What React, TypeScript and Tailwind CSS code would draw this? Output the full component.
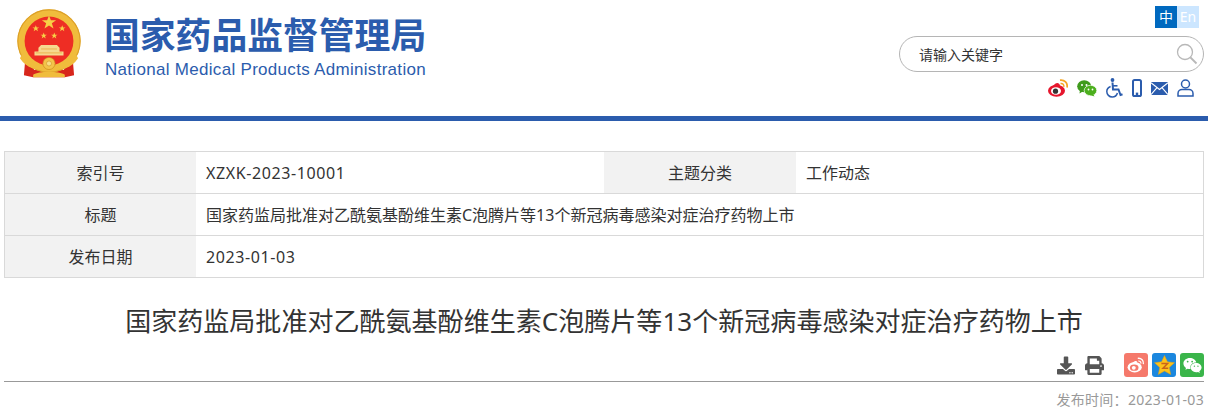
import { FaDownload, FaPrint, FaWeixin } from "react-icons/fa";

const cjk = "font-['Noto_Sans','Noto_Sans_CJK_SC',sans-serif]";

function Emblem() {
  const stars = [
    [25, 10, 1.8],
    [15, 14.5, 0.85],
    [35, 14.5, 0.85],
    [21, 20, 0.8],
    [29, 20, 0.8],
  ];
  return (
    <svg width="66" height="72" viewBox="0 0 50 54">
      <path d="M7 38 L6 50 L13 51.5 L37 51.5 L44 50 L43 38 L36 46 L14 46 Z" fill="#d8261c" />
      <circle cx="25" cy="24" r="24" fill="#f0bc3c" />
      <circle cx="25" cy="24" r="23.6" fill="none" stroke="#dc9f28" strokeWidth="0.8" />
      <circle cx="25" cy="24" r="18.5" fill="#ee2d24" />
      {stars.map(([x, y, s], i) => (
        <polygon
          key={i}
          transform={`translate(${x} ${y}) scale(${s})`}
          points="0,-3 0.8,-1 3,-1 1.2,0.3 1.9,2.5 0,1.2 -1.9,2.5 -1.2,0.3 -3,-1 -0.8,-1"
          fill="#f7d046"
        />
      ))}
      <path d="M14 35 L14 32 L17 32 L17 29 L19 27 L31 27 L33 29 L33 32 L36 32 L36 35 Z" fill="#f6d98f" />
      <path d="M15 33 H35" stroke="#e8a030" strokeWidth="0.5" />
      <path d="M19 30 H31" stroke="#e8a030" strokeWidth="0.5" />
      <path d="M5 33 C10 41 18 43 25 43 C32 43 40 41 45 33 L47 37 C42 45 34 46 25 46 C16 46 8 45 3 37 Z" fill="#f0bc3c" />
      <circle cx="25" cy="41" r="4.6" fill="#f3c449" stroke="#c98a1a" strokeWidth="0.5" />
      <circle cx="25" cy="41" r="1.9" fill="#f8dd85" stroke="#c98a1a" strokeWidth="0.4" />
      <path d="M13 49.5 C17 46.5 33 46.5 37 49.5 V51.5 H13 Z" fill="#f0bc3c" />
    </svg>
  );
}

function WeiboColor() {
  return (
    <svg width="20" height="18" viewBox="0 0 20 18">
      <ellipse cx="8.5" cy="11.8" rx="8.5" ry="6" fill="#e6162d" />
      <path d="M5 7 C8 2.5 11.5 3.5 12 6.5 L9 8.5 Z" fill="#e6162d" />
      <ellipse cx="8" cy="12" rx="5" ry="3.8" fill="#fff" />
      <circle cx="7.5" cy="12.2" r="2.6" fill="#333" />
      <path d="M12 1.2 C16.5 0.6 20 4 19 8.5" fill="none" stroke="#f5a623" strokeWidth="1.7" />
      <path d="M12.5 4.5 C14.8 4.2 16.3 5.8 15.8 8" fill="none" stroke="#f5a623" strokeWidth="1.4" />
    </svg>
  );
}

function WechatColor() {
  return (
    <svg width="20" height="17" viewBox="0 0 20 17">
      <ellipse cx="7.2" cy="6.3" rx="7" ry="6" fill="#3f9b1c" />
      <path d="M3 10 L2.5 13.5 L6.5 11 Z" fill="#3f9b1c" />
      <ellipse cx="13.5" cy="10.5" rx="6.3" ry="5.2" fill="#4caf1d" stroke="#fff" strokeWidth="0.7" />
      <path d="M16 14 L17.5 16.5 L13 15 Z" fill="#4caf1d" />
      <circle cx="5" cy="5" r="1" fill="#fff" />
      <circle cx="9.5" cy="5" r="1" fill="#fff" />
      <circle cx="11.5" cy="9.5" r="0.9" fill="#fff" />
      <circle cx="15.5" cy="9.5" r="0.9" fill="#fff" />
    </svg>
  );
}

function WheelchairIcon() {
  return (
    <svg width="17" height="20" viewBox="0 0 17 20" fill="none" stroke="#2b5cad">
      <circle cx="6.5" cy="2" r="1.9" fill="#2b5cad" stroke="none" />
      <path d="M6.5 4.5 L7 11.5 H12.5 L14.5 17 L16.5 16.2" strokeWidth="2" />
      <path d="M7 7.8 H11.5" strokeWidth="1.6" />
      <path d="M4.6 8.5 C2 9.5 0.8 11.5 0.8 13.5 C0.8 16.5 3.2 19 6.2 19 C8.8 19 10.8 17.2 11.4 15" strokeWidth="1.5" />
    </svg>
  );
}

function PhoneIcon() {
  return (
    <svg width="10" height="18" viewBox="0 0 10 18">
      <rect x="1" y="1" width="8" height="16" rx="1.6" fill="none" stroke="#2b5cad" strokeWidth="2" />
      <rect x="3.8" y="13.6" width="2.4" height="2.4" fill="#2b5cad" />
    </svg>
  );
}

function MailIcon() {
  return (
    <svg width="17" height="13" viewBox="0 0 17 13">
      <rect width="17" height="13" fill="#2b5cad" />
      <path d="M0 0.8 L8.5 7.5 L17 0.8 M0 12.6 L6 5.6 M17 12.6 L11 5.6" fill="none" stroke="#fff" strokeWidth="1.1" />
    </svg>
  );
}

function PersonIcon() {
  return (
    <svg width="17" height="18" viewBox="0 0 17 18">
      <circle cx="8.5" cy="5" r="4" fill="none" stroke="#2b5cad" strokeWidth="1.5" />
      <path d="M1 17 V14.5 C1 12 3 10.5 5 10.5 H12 C14 10.5 16 12 16 14.5 V17 Z" fill="none" stroke="#2b5cad" strokeWidth="1.5" />
    </svg>
  );
}

function SearchIcon() {
  return (
    <svg width="22" height="25" viewBox="0 0 22 25" fill="none" stroke="#b8b8b8">
      <circle cx="9" cy="10" r="7.5" strokeWidth="1.3" />
      <path d="M14.5 15.5 L20.5 21.5" strokeWidth="1.8" />
    </svg>
  );
}

function WeiboShare() {
  return (
    <div className="flex h-6 w-6 items-center justify-center rounded-[3px] bg-[#f5796b]">
      <svg width="18" height="16" viewBox="0 0 20 18">
        <ellipse cx="8.5" cy="11.5" rx="8" ry="5.8" fill="#fff" />
        <path d="M6 6.5 C9 3.5 11 4 11.5 6 L9 8 Z" fill="#fff" />
        <ellipse cx="8" cy="12" rx="4.8" ry="3.6" fill="#f5796b" />
        <circle cx="7.5" cy="12.2" r="2.2" fill="#fff" />
        <path d="M12 1.5 C16 1 19 4 18.3 8" fill="none" stroke="#fff" strokeWidth="1.5" />
        <path d="M12.5 4.5 C14.5 4.3 15.8 5.6 15.5 7.5" fill="none" stroke="#fff" strokeWidth="1.3" />
      </svg>
    </div>
  );
}

function QzoneShare() {
  return (
    <div className="flex h-6 w-6 items-center justify-center rounded-[3px] bg-[#1b87de]">
      <svg width="21" height="20" viewBox="0 0 20 19">
        <polygon points="10,0.5 12.8,6.5 19.5,7.3 14.5,11.8 15.9,18.5 10,15.2 4.1,18.5 5.5,11.8 0.5,7.3 7.2,6.5" fill="#fcc21b" stroke="#e8a210" strokeWidth="0.5" />
        <path d="M7 8 H13 L8.5 12.5 H13.5" fill="none" stroke="#c9631a" strokeWidth="1.4" />
      </svg>
    </div>
  );
}

function WechatShare() {
  return (
    <div className="flex h-6 w-6 items-center justify-center rounded-[3px] bg-[#3ab54a]">
      <FaWeixin className="h-[19px] w-[19px] text-white" />
    </div>
  );
}

function LabelCell({ children, first }: { children: React.ReactNode; first?: boolean }) {
  return (
    <div className={first ? "flex w-[191px] shrink-0 items-center justify-center bg-[#f2f2f2]" : "flex w-[192px] shrink-0 items-center justify-center bg-[#f2f2f2]"}>
      {children}
    </div>
  );
}

export default function App() {
  return (
    <div className={`h-[417px] w-[1208px] overflow-hidden bg-white text-[#333] ${cjk}`}>
      <header className="flex h-[121px] justify-between border-b-[5px] border-[#2b5cad] pr-1">
        <div className="flex items-start pl-4 pt-[9px]">
          <Emblem />
          <div className="ml-[22px] flex flex-col text-[#2b5cad]">
            <div className="mt-[3px] text-[35.8px] leading-[46px] font-bold whitespace-nowrap">国家药品监督管理局</div>
            <div className="mt-[2px] ml-px font-['Liberation_Sans',sans-serif] text-[17px] leading-[20px] tracking-[0.3px] whitespace-nowrap">
              National Medical Products Administration
            </div>
          </div>
        </div>
        <div className="flex w-[305px] flex-col items-end pt-[6px]">
          <div className="mr-[5px] flex text-[14px] leading-[22px]">
            <span className="h-[22px] w-[22px] bg-[#0069bf] text-center text-white">中</span>
            <span className="h-[22px] w-[22px] bg-[#cce6ff] text-center text-white">En</span>
          </div>
          <div className="mt-[8px] flex h-[36px] w-[305px] items-center justify-between rounded-[18px] border border-[#b5b5b5] pr-[5px] pl-[19px] text-[14px]">
            <span>请输入关键字</span>
            <SearchIcon />
          </div>
          <div className="mt-[6px] flex h-[20px] items-center pr-[10px]">
            <WeiboColor />
            <span className="ml-[9px] flex"><WechatColor /></span>
            <span className="ml-[9px] flex"><WheelchairIcon /></span>
            <span className="ml-[9px] flex"><PhoneIcon /></span>
            <span className="ml-[9px] flex"><MailIcon /></span>
            <span className="ml-[9px] flex"><PersonIcon /></span>
          </div>
        </div>
      </header>

      <div className="mx-1 mt-[30px] border border-[#d9d9d9] text-[16px]">
        <div className="flex h-[42px] border-b border-[#d9d9d9]">
          <LabelCell first>索引号</LabelCell>
          <div className="flex w-[408px] shrink-0 items-center pl-[10px] tracking-[0.6px]">XZXK-2023-10001</div>
          <LabelCell>主题分类</LabelCell>
          <div className="flex flex-1 items-center pl-[10px]">工作动态</div>
        </div>
        <div className="flex h-[42px] border-b border-[#d9d9d9]">
          <LabelCell first>标题</LabelCell>
          <div className="flex flex-1 items-center pl-[10px]">国家药监局批准对乙酰氨基酚维生素C泡腾片等13个新冠病毒感染对症治疗药物上市</div>
        </div>
        <div className="flex h-[41px]">
          <LabelCell first>发布日期</LabelCell>
          <div className="flex flex-1 items-center pl-[10px] tracking-[0.6px]">2023-01-03</div>
        </div>
      </div>

      <h1 className="mt-[24px] text-center text-[26px] leading-[38px] font-normal tracking-[0.04px]">
        国家药监局批准对乙酰氨基酚维生素C泡腾片等13个新冠病毒感染对症治疗药物上市
      </h1>

      <div className="mx-1 mt-[13px] flex h-[29px] items-start justify-end border-b border-[#999]">
        <FaDownload className="mt-[3px] h-[19px] w-[18px] text-[#555]" />
        <FaPrint className="mt-[3px] ml-[10px] h-[19px] w-[19px] text-[#555]" />
        <div className="ml-[20px] flex gap-1">
          <WeiboShare />
          <QzoneShare />
          <WechatShare />
        </div>
      </div>

      <div className="mx-1 mt-[8px] text-right text-[14px] leading-[20px] tracking-[0.3px] text-[#999]">发布时间：2023-01-03</div>
    </div>
  );
}
